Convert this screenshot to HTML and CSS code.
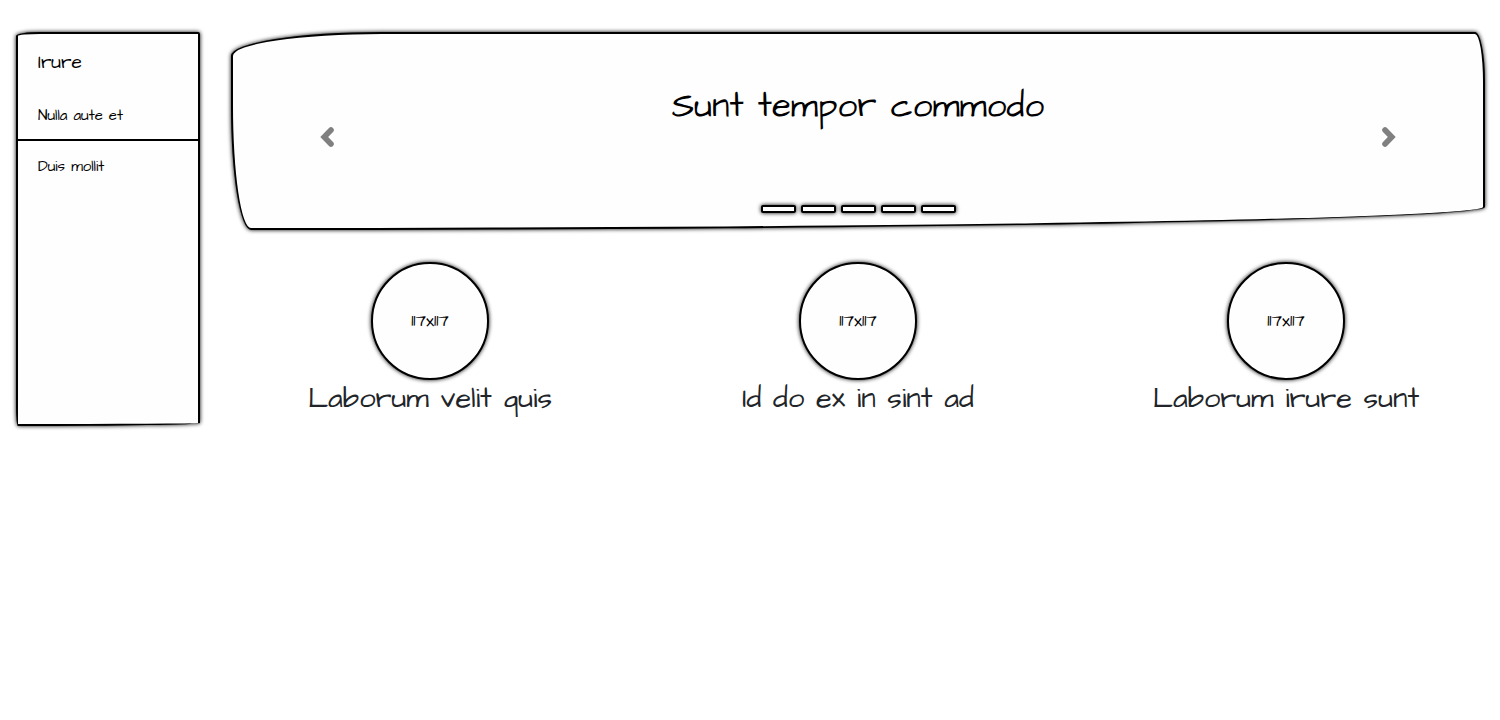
FILE: index.html
```html
<!DOCTYPE html>
<html lang="en">
<head>
<meta charset="utf-8">
<meta name="viewport" content="width=device-width, initial-scale=1">
<title>Sunt tempor commodo</title>
<link rel="stylesheet" href="styles.css">
</head>
<body>
<div class="page">
  <nav class="sidebar" aria-label="Sections">
    <h2 class="sidebar-title">Irure</h2>
    <ul class="menu">
      <li class="menu-item"><a class="menu-link" href="#nulla">Nulla aute et</a></li>
      <li class="menu-item"><a class="menu-link" href="#duis">Duis mollit</a></li>
    </ul>
  </nav>
  <main class="main">
    <section class="carousel">
      <button class="arrow" type="button" aria-label="Previous">
        <svg width="14" height="20" viewBox="0 0 14 20" aria-hidden="true"><path d="M11 3 4.2 10l6.8 7"/></svg>
      </button>
      <div class="slide">
        <h1 class="slide-title">Sunt tempor commodo</h1>
        <div class="indicators">
          <button class="indicator" type="button" aria-label="Slide 1"></button>
          <button class="indicator" type="button" aria-label="Slide 2"></button>
          <button class="indicator" type="button" aria-label="Slide 3"></button>
          <button class="indicator" type="button" aria-label="Slide 4"></button>
          <button class="indicator" type="button" aria-label="Slide 5"></button>
        </div>
      </div>
      <button class="arrow" type="button" aria-label="Next">
        <svg width="14" height="20" viewBox="0 0 14 20" aria-hidden="true"><path d="m3 3 6.8 7L3 17"/></svg>
      </button>
    </section>
    <section class="cards">
      <article class="card"><div class="circle">117x117</div><h2 class="card-title">Laborum velit quis</h2></article>
      <article class="card"><div class="circle">117x117</div><h2 class="card-title">Id do ex in sint ad</h2></article>
      <article class="card"><div class="circle">117x117</div><h2 class="card-title">Laborum irure sunt</h2></article>
    </section>
  </main>
</div>
</body>
</html>
```
FILE: styles.css
```css
* {
  box-sizing: border-box;
}

body {
  margin: 0;
  background: #fff;
  color: #000;
  font-family: "Architects Daughter", Lato, sans-serif;
  font-size: 16px;
  line-height: 24px;
}

h1,
h2,
ul {
  margin: 0;
  padding: 0;
  font-weight: 400;
}

.page {
  display: flex;
  align-items: flex-start;
  gap: 31px;
  padding: 32px 15px 32px 16px;
}

.sidebar,
.carousel,
.circle,
.indicator {
  border: 2px solid #000;
  background: #fefefe;
  box-shadow: 0 0 4px #000;
}

.sidebar {
  flex: 0 0 184px;
  min-height: 394px;
  border-radius: 24px 2px 180px 2px / 4px 2px 3px 20px;
}

.sidebar-title {
  padding: 17px 20px 15px;
  font-size: 19px;
  line-height: 24px;
}

.menu {
  list-style: none;
}

.menu-item + .menu-item {
  border-top: 2px solid #000;
}

.menu-link {
  display: block;
  padding: 13px 20px 11px;
  color: #000;
  font-size: 15px;
  line-height: 25px;
  text-decoration: none;
}

.main {
  flex: 1;
  min-width: 0;
}

.carousel {
  display: flex;
  min-height: 198px;
  border-radius: 12% 10px 98% 20px / 24px 50px 23px 124px;
}

.arrow {
  display: flex;
  flex: 0 0 15%;
  align-items: center;
  justify-content: center;
  padding: 12px 0 0;
  border: 0;
  background: none;
  cursor: pointer;
}

.arrow path {
  fill: none;
  stroke: #808080;
  stroke-width: 5.6;
  stroke-linecap: round;
  stroke-linejoin: miter;
}

.slide {
  display: flex;
  flex: 1;
  flex-direction: column;
  align-items: center;
  justify-content: space-between;
  padding: 48px 0 15px;
}

.slide-title {
  font-size: 35px;
  line-height: 48px;
}

.indicators {
  display: flex;
  gap: 5px;
}

.indicator {
  width: 35px;
  height: 8px;
  padding: 0;
  border-radius: 2px;
  cursor: pointer;
}

.cards {
  display: grid;
  grid-template-columns: repeat(3, 1fr);
  gap: 30px;
  padding-top: 32px;
}

.card {
  display: flex;
  flex-direction: column;
  align-items: center;
}

.circle {
  display: flex;
  align-items: center;
  justify-content: center;
  width: 118px;
  height: 118px;
  border-radius: 50%;
  font-size: 17px;
}

.card-title {
  color: #212529;
  font-size: 29px;
  line-height: 38px;
}
```
